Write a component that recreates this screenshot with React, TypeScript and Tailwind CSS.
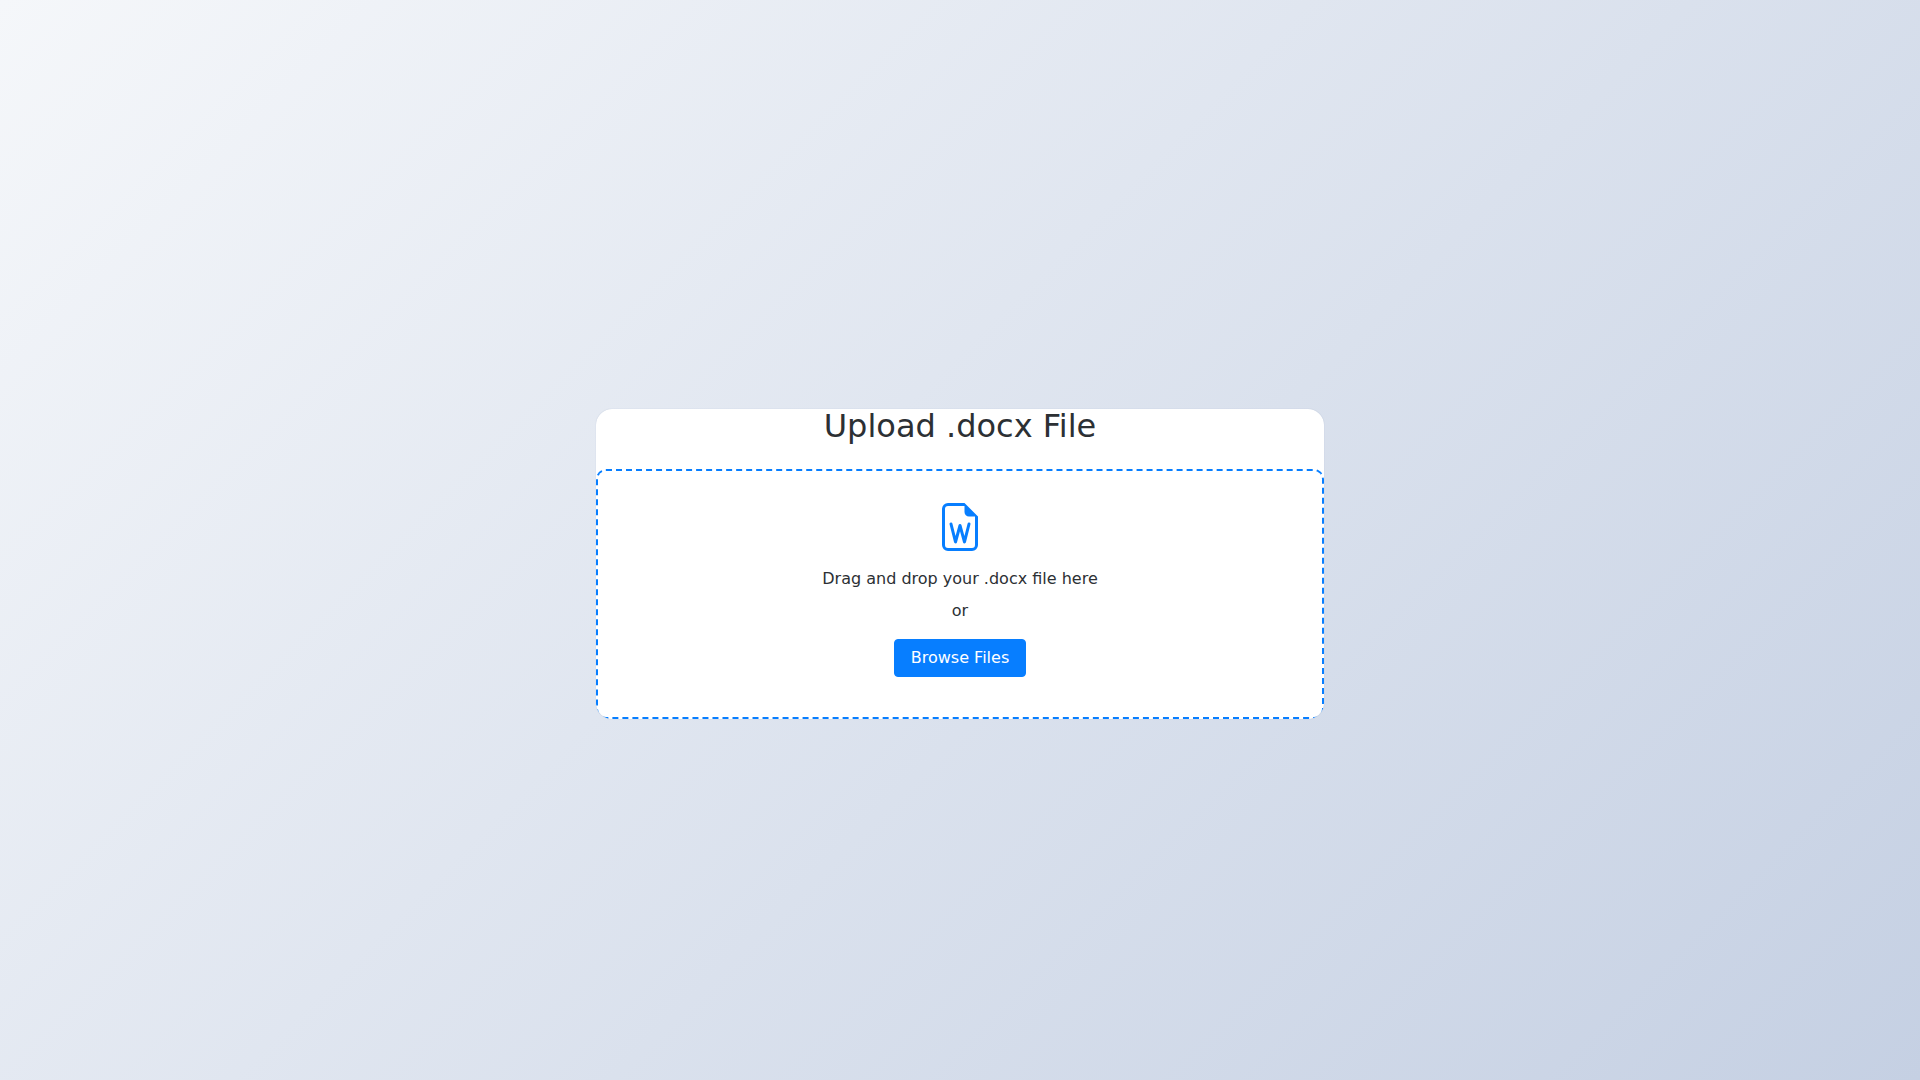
import React, { useRef } from "react";
import { BsFileEarmarkWord } from "react-icons/bs";

export default function App() {
  const fileInput = useRef<HTMLInputElement>(null);

  return (
    <div className="min-h-screen flex items-center justify-center bg-[linear-gradient(135deg,#f5f7fa_0%,#c5d0e3_100%)] text-[#2c3034] font-['DejaVu_Sans',sans-serif]">
      <main className="w-full max-w-[728px] mt-12 rounded-2xl bg-white text-center shadow-[0_0_1px_rgba(60,90,140,0.3)]">
        <h1 className="mb-[26px] text-[32px] leading-[34px] font-normal">Upload .docx File</h1>

        {/* Drop zone, its lower corners follow the card */}
        <div className="overflow-hidden rounded-b-2xl">
          <div className="flex flex-col items-center rounded-[10px] border-2 border-dashed border-[#077eff] p-8">
            <BsFileEarmarkWord className="mb-4 h-12 w-12 text-[#077eff]" />
            <p className="mb-2 text-base">Drag and drop your .docx file here</p>
            <p className="mb-4 text-base">or</p>
            <button
              type="button"
              onClick={() => fileInput.current?.click()}
              className="mb-2 cursor-pointer rounded-sm border border-[#077eff] bg-[#077eff] px-4 py-1.5 text-base text-white"
            >
              Browse Files
            </button>
            <input ref={fileInput} type="file" accept=".docx" aria-label="Upload .docx file" className="hidden" />
          </div>
        </div>
      </main>
    </div>
  );
}
